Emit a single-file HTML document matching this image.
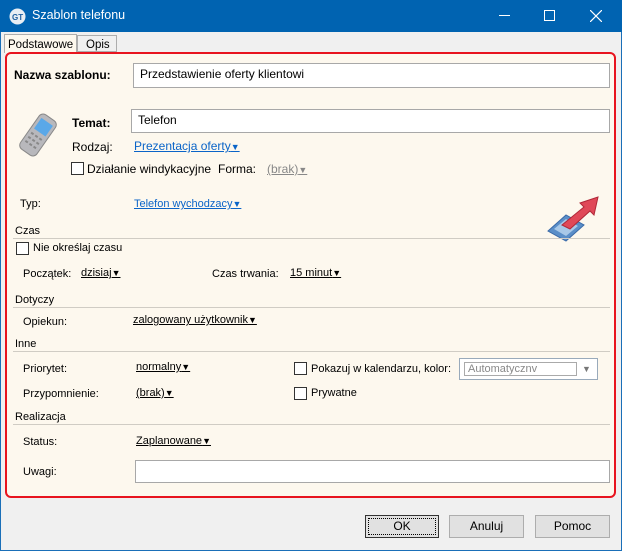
<!DOCTYPE html>
<html><head><meta charset="utf-8"><style>
*{margin:0;padding:0;box-sizing:border-box}
body{width:622px;height:551px;background:#f0f0f0;font-family:"Liberation Sans",sans-serif;font-size:11px;color:#000;position:relative;overflow:hidden}
.a{position:absolute;white-space:nowrap}
.win{position:absolute;left:0;top:0;width:622px;height:551px;border:1px solid #1a6fb8}
.tb{position:absolute;left:0;top:0;width:622px;height:32px;background:#0063b1}
.panel{position:absolute;left:5px;top:52px;width:611px;height:446px;border:2px solid #e8141e;border-radius:6px;background:#fdf8ee}
.inp{position:absolute;background:#fff;border:1px solid #a8a8a8;padding:3px 6px;font-size:12px}
.lnk{color:#0a64c8;text-decoration:underline}
.dd{text-decoration:underline}
.cb{position:absolute;width:13px;height:13px;border:1px solid #333;background:#fff}
.sec{position:absolute;left:13px;width:597px;height:1px;background:#d0ccc4}
.btn{position:absolute;top:515px;height:23px;border:1px solid #adadad;background:#e1e1e1;text-align:center;line-height:21px;font-size:12px}
.tri{font-size:9px}
</style></head><body>
<div class="win"></div>
<div class="tb"></div>
<svg class="a" style="left:9px;top:8px" width="17" height="17"><circle cx="8.5" cy="8.5" r="8" fill="#e8eef4"/><text x="3" y="12" font-size="8" font-weight="bold" fill="#2060a0" font-family="Liberation Sans">GT</text></svg>
<div class="a" style="left:32px;top:8px;color:#fff;font-size:12.5px">Szablon telefonu</div>
<div class="a" style="left:499px;top:15px;width:11px;height:1px;background:#fff"></div>
<div class="a" style="left:544px;top:10px;width:11px;height:11px;border:1px solid #fff"></div>
<svg class="a" style="left:590px;top:10px" width="12" height="12"><path d="M0 0L12 12M12 0L0 12" stroke="#fff" stroke-width="1.2"/></svg>

<div class="a" style="left:4px;top:34px;width:73px;height:19px;background:#fdf8ee;border:1px solid #adadad;border-bottom:none;padding:4px 0 0 3px;font-size:11.5px">Podstawowe</div>
<div class="a" style="left:77px;top:35px;width:40px;height:17px;background:#f0f0f0;border:1px solid #adadad;padding:3px 0 0 8px;font-size:11.5px">Opis</div>

<div class="panel"></div>
<div class="a" style="left:14px;top:68px;font-weight:bold;font-size:12px">Nazwa szablonu:</div>
<div class="inp" style="left:133px;top:63px;width:477px;height:25px">Przedstawienie oferty klientowi</div>

<svg class="a" style="left:14px;top:112px" width="48" height="46"><g transform="rotate(35 24 23)"><rect x="14" y="2" width="20" height="42" rx="5" fill="#b8b8bc" stroke="#888"/><rect x="17" y="7" width="14" height="13" fill="#5aa8e8"/><g fill="#888"><rect x="17" y="24" width="3" height="2"/><rect x="22" y="24" width="3" height="2"/><rect x="27" y="24" width="3" height="2"/><rect x="17" y="29" width="3" height="2"/><rect x="22" y="29" width="3" height="2"/><rect x="27" y="29" width="3" height="2"/><rect x="17" y="34" width="3" height="2"/><rect x="22" y="34" width="3" height="2"/><rect x="27" y="34" width="3" height="2"/></g></g></svg>

<div class="a" style="left:72px;top:116px;font-weight:bold;font-size:12px">Temat:</div>
<div class="inp" style="left:131px;top:109px;width:479px;height:24px">Telefon</div>
<div class="a" style="left:72px;top:140px;font-size:12px">Rodzaj:</div>
<div class="a lnk" style="left:134px;top:139px;font-size:12px">Prezentacja oferty<span class="tri">▼</span></div>
<div class="cb" style="left:71px;top:162px"></div>
<div class="a" style="left:87px;top:162px;font-size:12px">Działanie windykacyjne</div>
<div class="a" style="left:218px;top:162px;font-size:12px">Forma:</div>
<div class="a dd" style="left:267px;top:162px;color:#888;font-size:12px">(brak)<span class="tri">▼</span></div>

<div class="a" style="left:20px;top:198px">Typ:</div>
<div class="a lnk" style="left:134px;top:198px">Telefon wychodzacy<span class="tri">▼</span></div>
<svg class="a" style="left:546px;top:195px" width="56" height="48"><path d="M2 36L20 20L38 30L20 46Z" fill="#5a8ec8" stroke="#3a6aa8"/><path d="M8 34L20 24L32 31L20 41Z" fill="#a8c8e8"/><path d="M16 30L38 12L34 8L52 2L48 20L44 16L24 34Z" fill="#e04858" stroke="#b02838"/></svg>

<div class="a" style="left:15px;top:225px">Czas</div><div class="sec" style="top:238px"></div>
<div class="cb" style="left:16px;top:242px"></div>
<div class="a" style="left:33px;top:242px">Nie określaj czasu</div>
<div class="a" style="left:23px;top:268px">Początek:</div>
<div class="a dd" style="left:81px;top:267px">dzisiaj<span class="tri">▼</span></div>
<div class="a" style="left:212px;top:268px">Czas trwania:</div>
<div class="a dd" style="left:290px;top:267px">15 minut<span class="tri">▼</span></div>

<div class="a" style="left:15px;top:294px">Dotyczy</div><div class="sec" style="top:307px"></div>
<div class="a" style="left:23px;top:316px">Opiekun:</div>
<div class="a dd" style="left:133px;top:314px">zalogowany użytkownik<span class="tri">▼</span></div>

<div class="a" style="left:15px;top:338px">Inne</div><div class="sec" style="top:351px"></div>
<div class="a" style="left:23px;top:363px">Priorytet:</div>
<div class="a dd" style="left:136px;top:361px">normalny<span class="tri">▼</span></div>
<div class="cb" style="left:294px;top:362px"></div>
<div class="a" style="left:311px;top:363px">Pokazuj w kalendarzu, kolor:</div>
<div class="a" style="left:459px;top:358px;width:139px;height:22px;border:1px solid #9ab;background:#fff"></div>
<div class="a" style="left:464px;top:362px;width:113px;height:14px;border:1px solid #aaa;color:#888;padding-left:3px;line-height:12px">Automatycznv</div>
<div class="a tri" style="left:582px;top:364px;color:#777">▼</div>
<div class="a" style="left:23px;top:388px">Przypomnienie:</div>
<div class="a dd" style="left:136px;top:387px">(brak)<span class="tri">▼</span></div>
<div class="cb" style="left:294px;top:387px"></div>
<div class="a" style="left:311px;top:387px">Prywatne</div>

<div class="a" style="left:15px;top:411px">Realizacja</div><div class="sec" style="top:424px"></div>
<div class="a" style="left:23px;top:436px">Status:</div>
<div class="a dd" style="left:136px;top:435px">Zaplanowane<span class="tri">▼</span></div>
<div class="a" style="left:23px;top:466px">Uwagi:</div>
<div class="inp" style="left:135px;top:460px;width:475px;height:23px"></div>

<div class="btn" style="left:365px;width:74px;border:1px solid #333;outline:1px dotted #000;outline-offset:-4px">OK</div>
<div class="btn" style="left:449px;width:75px">Anuluj</div>
<div class="btn" style="left:535px;width:75px">Pomoc</div>
</body></html>
